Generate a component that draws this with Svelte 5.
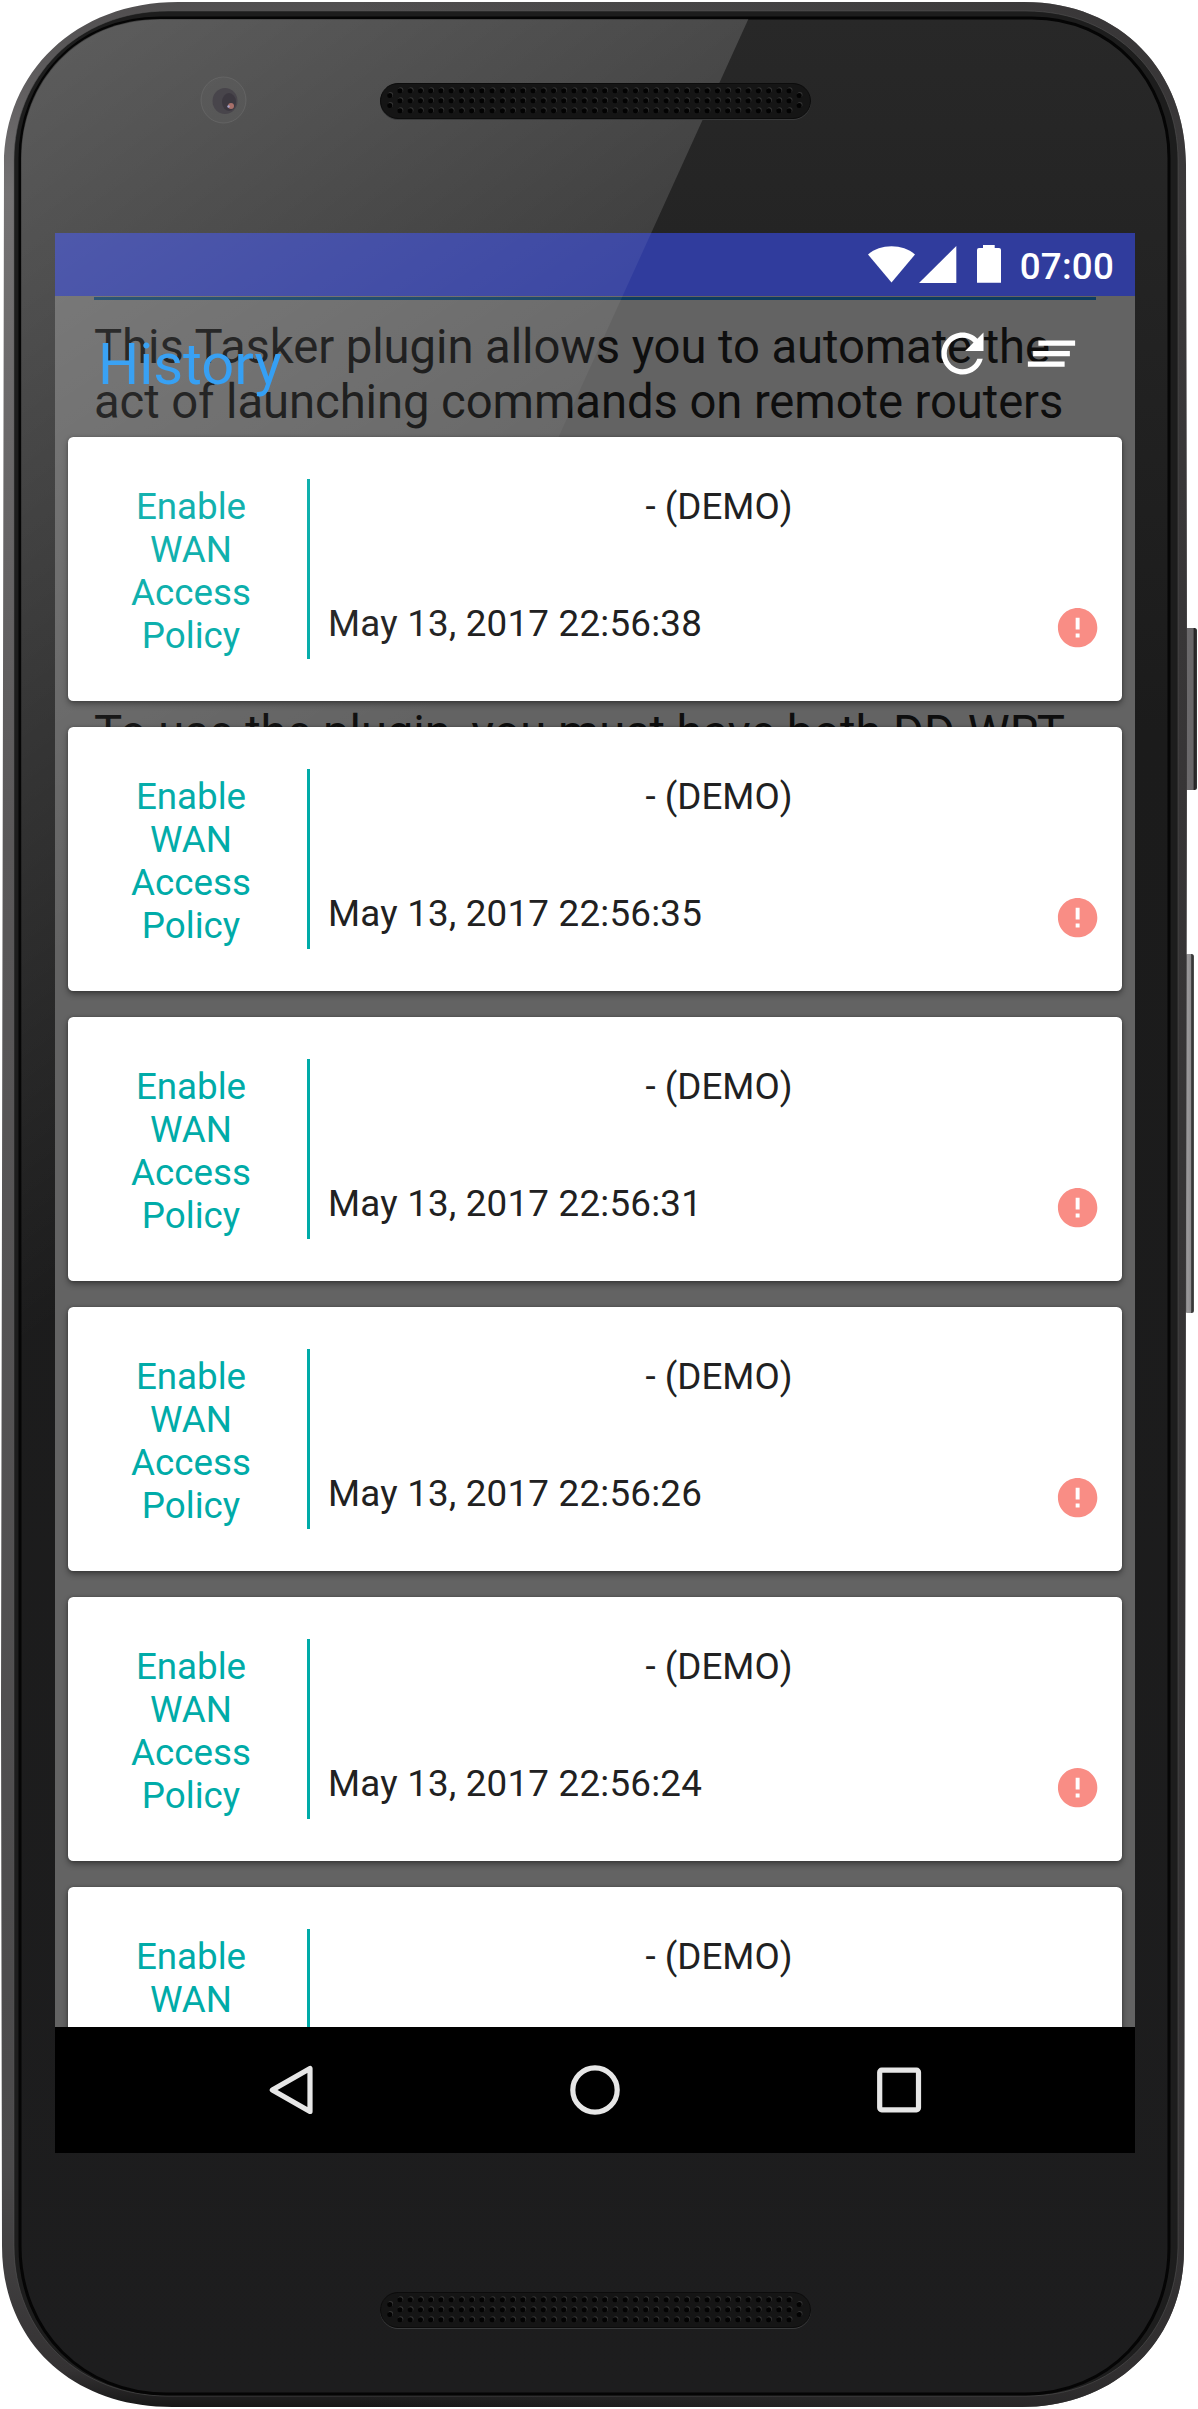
<script>
  const times = ['22:56:38', '22:56:35', '22:56:31', '22:56:26', '22:56:24', '22:56:20'];
  const columns = Array.from({ length: 39 }, (_, i) => 20 + i * 10.24);
  const rows = [7.7, 17.7, 27.7];
</script>

{#snippet speaker()}
  <svg class="speaker" viewBox="0 0 432 36">
    <rect class="slot" x="0.5" y="0.5" width="430" height="35" rx="17.5" />
    {#each columns as x}
      {#each rows as y}
        <circle class="hole-rim" cx={x + 0.7} cy={y - 0.8} r="2.6" />
        <circle class="hole" cx={x} cy={y} r="2.5" />
      {/each}
    {/each}
    {#each [9.8, 419.2] as x}
      {#each [12.5, 22.5] as y}
        <circle class="hole-rim" cx={x + 0.7} cy={y - 0.8} r="2.6" />
        <circle class="hole" cx={x} cy={y} r="2.5" />
      {/each}
    {/each}
  </svg>
{/snippet}

<div class="phone">
  <svg class="frame" viewBox="0 0 1198 2409">
    <defs>
      <linearGradient id="rim" x1="0" y1="0" x2="0" y2="1">
        <stop offset="0" stop-color="#504e4f" />
        <stop offset="0.08" stop-color="#757374" />
        <stop offset="0.35" stop-color="#5a5859" />
        <stop offset="0.9" stop-color="#4b4a4b" />
        <stop offset="0.985" stop-color="#343233" />
        <stop offset="1" stop-color="#171717" />
      </linearGradient>
      <linearGradient id="rimShade" x1="0" y1="0" x2="1" y2="0">
        <stop offset="0.3" stop-color="#333" stop-opacity="0" />
        <stop offset="1" stop-color="#302e2f" stop-opacity="0.85" />
      </linearGradient>
      <linearGradient id="glass" x1="0" y1="0" x2="0" y2="1">
        <stop offset="0" stop-color="#282828" />
        <stop offset="0.3" stop-color="#1b1b1b" />
        <stop offset="1" stop-color="#1d1d1e" />
      </linearGradient>
      <linearGradient id="shine" gradientUnits="userSpaceOnUse" x1="0" y1="0" x2="640" y2="914">
        <stop offset="0" stop-color="#fff" stop-opacity="0.26" />
        <stop offset="1" stop-color="#fff" stop-opacity="0" />
      </linearGradient>
      <linearGradient id="screenShine" gradientUnits="userSpaceOnUse" x1="0" y1="0" x2="457" y2="702">
        <stop offset="0" stop-color="#fff" stop-opacity="0.2" />
        <stop offset="1" stop-color="#fff" stop-opacity="0" />
      </linearGradient>
      <linearGradient id="key" x1="0" y1="0" x2="1" y2="0">
        <stop offset="0" stop-color="#454345" />
        <stop offset="0.2" stop-color="#6b696b" />
        <stop offset="0.65" stop-color="#686668" />
        <stop offset="0.8" stop-color="#222" />
        <stop offset="1" stop-color="#3a393a" />
      </linearGradient>
      <linearGradient id="longKey" x1="0" y1="0" x2="1" y2="0">
        <stop offset="0" stop-color="#777" />
        <stop offset="0.3" stop-color="#9a989a" />
        <stop offset="0.65" stop-color="#8c8a8c" />
        <stop offset="0.75" stop-color="#2a2a2a" />
        <stop offset="1" stop-color="#555" />
      </linearGradient>
      <clipPath id="glassClip">
        <path d="M160 19H1032C1112 19 1168 82 1168 158V2248C1168 2330 1108 2393 1026 2393H166C84 2393 21 2332 21 2246V158C21 82 76 19 160 19Z" />
      </clipPath>
    </defs>
    <rect x="1185" y="628" width="12" height="162" rx="2.5" fill="url(#key)" />
    <rect x="1185" y="954" width="9" height="359" rx="2.5" fill="url(#longKey)" />
    <path fill="url(#rim)" d="M178 2H1024C1122 2 1186 72 1186 165L1187 700L1184 2250C1184 2342 1114 2407 1022 2407H172C72 2407 2 2342 2 2246L1 1700L4 165C4 72 76 2 178 2Z" />
    <path fill="url(#rimShade)" d="M178 2H1024C1122 2 1186 72 1186 165L1187 700L1184 2250C1184 2342 1114 2407 1022 2407H172C72 2407 2 2342 2 2246L1 1700L4 165C4 72 76 2 178 2Z" />
    <path fill="#1d1d1d" stroke="#5a595a" stroke-opacity="0.5" d="M168 11H1026C1117 11 1178 78 1178 160V2248C1176 2336 1112 2396 1026 2396H168C80 2396 14 2334 14 2246V160C14 78 76 11 168 11Z" />
    <path fill="url(#glass)" stroke="#050505" stroke-width="3" d="M160 18H1032C1113 18 1169 82 1169 158V2248C1169 2330 1108 2394 1026 2394H166C84 2394 20 2332 20 2246V158C20 82 76 18 160 18Z" />
    <polygon clip-path="url(#glassClip)" fill="url(#shine)" points="0,0 757,0 0,1667" />
    <ellipse cx="223.5" cy="100" rx="22.5" ry="23" fill="#666" fill-opacity="0.28" stroke="#777" stroke-opacity="0.4" />
    <ellipse cx="225" cy="101" rx="12.5" ry="13" fill="#48454b" />
    <ellipse cx="229" cy="102" rx="7" ry="9" fill="#3c3840" />
    <circle cx="231" cy="106" r="3" fill="#a8706a" />
    <circle cx="228.5" cy="106.500" r="1.2" fill="#a9a4cc" />
  </svg>

  <div class="ear">{@render speaker()}</div>

  <main class="screen">
    <header class="status">
      <svg class="wifi" viewBox="0 0 47 37"><path d="M0 8.500C6.500 3 14.500 .3 23.500 .3S40.500 3 47 8.500L23.500 36.500Z" /></svg>
      <svg class="signal" viewBox="0 0 38 37"><path d="M37.300 0V37H0Z" /></svg>
      <svg class="battery" viewBox="0 0 24 38"><path d="M6 0H17.700V3H22Q24 3 24 5V37.700H0V5Q0 3 2 3H6Z" /></svg>
      <span class="clock">07:00</span>
    </header>

    <section class="content">
      <div class="help">
        <p>This Tasker plugin allows you to automate the act of launching commands on remote routers</p>
        <p class="second">To use the plugin, you must have both DD-WRT</p>
      </div>
      <div class="toolbar">
        <h1>History</h1>
        <svg class="action" viewBox="0 0 24 24"><path d="M17.650 6.350C16.200 4.900 14.210 4 12 4c-4.420 0-7.990 3.580-7.990 8s3.570 8 7.990 8c3.730 0 6.840-2.550 7.730-6h-2.080c-.82 2.330-3.040 4-5.650 4-3.310 0-6-2.690-6-6s2.690-6 6-6c1.660 0 3.140.69 4.220 1.780L13 11h7V4l-2.350 2.350z" /></svg>
        <svg class="action clear" viewBox="0 0 24 24"><path d="M5 13h14v-2H5v2zm-2 4h14v-2H3v2zM7 7v2h14V7H7z" /></svg>
      </div>
      <div class="list">
        {#each times as time}
          <article class="card">
            <div class="command">Enable WAN Access Policy</div>
            <div class="details">
              <div class="router">- (DEMO)</div>
              <div class="result">
                <time>May 13, 2017 {time}</time>
                <svg class="error" viewBox="0 0 24 24"><path d="M12 2C6.480 2 2 6.480 2 12s4.480 10 10 10 10-4.480 10-10S17.520 2 12 2zm1 15h-2v-2h2v2zm0-4h-2V7h2v6z" /></svg>
              </div>
            </div>
          </article>
        {/each}
      </div>
    </section>

    <nav class="keys">
      <svg viewBox="0 0 50 50"><path d="M44 3.500V46.500L6.300 25Z" stroke-linejoin="round" /></svg>
      <svg viewBox="0 0 50 50"><circle cx="25" cy="25" r="22.200" /></svg>
      <svg viewBox="0 0 50 50"><rect x="5.700" y="5.200" width="38.800" height="39.600" rx="2" /></svg>
    </nav>

    <svg class="glare" viewBox="55 233 1080 1920"><polygon fill="url(#screenShine)" points="0,0 757,0 0,1667" /></svg>
  </main>

  <div class="chin">{@render speaker()}</div>
</div>

<style>
  :global(body) {
    margin: 0;
    background: #fff;
  }
  .phone {
    position: relative;
    width: 1198px;
    height: 2409px;
    display: grid;
    grid-template-rows: 233px 1920px 256px;
    overflow: hidden;
    font-family: Roboto, sans-serif;
  }
  svg {
    display: block;
    flex: none;
  }
  .frame {
    position: absolute;
    inset: 0;
    width: 1198px;
    height: 2409px;
  }
  .ear,
  .chin {
    position: relative;
    padding: 83px 0 0 380px;
  }
  .chin {
    padding-top: 139px;
  }
  .speaker {
    width: 432px;
    height: 36px;
    filter: drop-shadow(0.5px 1px 0 #3a3b3c);
  }
  .slot {
    fill: #151515;
    stroke: #0c0c0c;
  }
  .hole-rim {
    fill: #343434;
  }
  .hole {
    fill: #030303;
  }
  .screen {
    position: relative;
    width: 1080px;
    margin-left: 55px;
    display: grid;
    grid-template-rows: 63px 1731px 126px;
    background: #636363;
  }
  .glare {
    position: absolute;
    inset: 0;
    width: 1080px;
    height: 1920px;
    pointer-events: none;
  }
  .status {
    background: #303c9d;
    display: flex;
    align-items: flex-start;
    justify-content: flex-end;
    box-sizing: border-box;
    padding: 12.500px 21px 0 0;
  }
  .status path {
    fill: #fff;
  }
  .wifi {
    width: 47px;
    height: 37px;
  }
  .signal {
    width: 38px;
    height: 37px;
    margin-left: 4px;
  }
  .battery {
    width: 24px;
    height: 38px;
    margin: -0.500px 19px 0 20px;
  }
  .clock {
    color: #fff;
    font-size: 36.750px;
    font-weight: 500;
    line-height: 43px;
    margin-top: -0.500px;
    letter-spacing: 0.200px;
  }
  .content {
    position: relative;
    overflow: hidden;
  }
  .help {
    position: absolute;
    top: 1px;
    left: 39px;
    width: 1002px;
    border-top: 3px solid #0d3c61;
    padding-top: 20px;
    color: #0e0e0e;
    font-size: 47.250px;
    line-height: 55px;
    letter-spacing: -0.090px;
  }
  .help p {
    margin: 0;
  }
  .help .second {
    margin-top: 276px;
  }
  .toolbar {
    position: relative;
    height: 141px;
    display: flex;
    align-items: flex-start;
    box-sizing: border-box;
    padding: 26px 52px 0 43px;
  }
  h1 {
    margin: 8px auto 0 0;
    font-size: 57.750px;
    line-height: 68px;
    font-weight: 400;
    color: #2196f3;
  }
  .action {
    width: 63px;
    height: 63px;
  }
  .action path {
    fill: #fff;
  }
  .clear {
    margin-left: 26px;
  }
  .list {
    position: relative;
    display: grid;
    gap: 26px;
    padding: 0 13px;
  }
  .card {
    height: 264px;
    box-sizing: border-box;
    display: grid;
    grid-template-columns: 242px 1fr;
    padding: 42px 21px 42px 0;
    border-radius: 5.250px;
    background: #fff;
    box-shadow: 0 3px 6px rgba(0, 0, 0, 0.4), 0 0 3px rgba(0, 0, 0, 0.25);
    font-size: 36.750px;
    line-height: 43px;
    color: #212121;
  }
  .command {
    height: 180px;
    box-sizing: border-box;
    border-right: 3px solid #00aba8;
    padding: 6px 51px 0 58px;
    text-align: center;
    color: #00aba8;
  }
  .details {
    padding: 6px 0 0 18px;
    display: grid;
    grid-template-rows: 117px 1fr;
  }
  .router {
    padding-left: 9px;
    text-align: center;
  }
  .result {
    display: flex;
    justify-content: space-between;
    align-items: flex-start;
  }
  time {
    letter-spacing: 0.220px;
  }
  .error {
    width: 47.250px;
    height: 47.250px;
    margin-top: 2px;
  }
  .error path {
    fill: #f98d85;
  }
  .keys {
    display: flex;
    align-items: center;
    justify-content: center;
    gap: 254px;
    background: #000;
  }
  .keys svg {
    width: 50px;
    height: 50px;
    fill: none;
    stroke: #e6e6e6;
    stroke-width: 5.200px;
  }
</style>
